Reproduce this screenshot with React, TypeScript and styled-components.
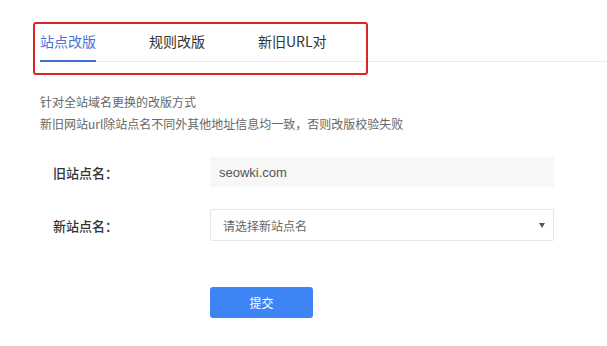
import React from 'react';
import styled, { createGlobalStyle } from 'styled-components';

const GlobalStyle = createGlobalStyle`
  html, body {
    margin: 0;
    padding: 0;
    background: #fff;
  }
  body {
    font-family: 'Noto Sans CJK SC', 'Noto Sans', 'Liberation Sans', sans-serif;
    color: #333;
  }
`;

export const Page = styled.div`
  position: relative;
  width: 607px;
  height: 346px;
  overflow: hidden;
  background: #fff;
`;

export const TabBar = styled.div`
  display: flex;
  align-items: flex-end;
  margin-left: 40px;
  padding-top: 31px;
  border-bottom: 1px solid #ececec;
`;

export const Tab = styled.div<{ active?: boolean }>`
  font-size: 14px;
  line-height: 20px;
  padding-bottom: 9px;
  margin-right: 53px;
  color: ${(p) => (p.active ? '#4873d4' : '#333')};
  border-bottom: 2px solid ${(p) => (p.active ? '#3d6fd8' : 'transparent')};
  margin-bottom: -1px;
  white-space: nowrap;
`;

export const Highlight = styled.div`
  position: absolute;
  left: 33px;
  top: 22px;
  width: 331px;
  height: 49px;
  border: 2px solid #dd2526;
  border-radius: 3px;
  pointer-events: none;
`;

export const Description = styled.div`
  margin: 29px 0 0 40px;
  font-size: 12px;
  line-height: 22px;
  color: #666;
`;

export const Form = styled.div`
  display: flex;
  flex-direction: column;
  padding-left: 53px;
  margin-top: 22px;
`;

export const Row = styled.div<{ gap?: number }>`
  display: flex;
  align-items: center;
  margin-bottom: ${(p) => p.gap ?? 22}px;
`;

export const Label = styled.div`
  width: 157px;
  font-size: 13px;
  font-weight: 500;
  color: #333;
`;

export const ReadonlyInput = styled.div`
  box-sizing: border-box;
  width: 344px;
  height: 30px;
  padding-left: 9px;
  display: flex;
  align-items: center;
  background: #f7f7f7;
  font-size: 13px;
  color: #555;
  font-family: 'Liberation Sans', 'Noto Sans CJK SC', sans-serif;
`;

export const Select = styled.div`
  box-sizing: border-box;
  width: 344px;
  height: 32px;
  padding: 0 8px 0 12px;
  display: flex;
  align-items: center;
  justify-content: space-between;
  border: 1px solid #e6e6e6;
  border-radius: 2px;
  font-size: 12px;
  color: #666;
`;

export const Caret = styled.span`
  width: 0;
  height: 0;
  border-left: 3px solid transparent;
  border-right: 3px solid transparent;
  border-top: 5px solid #555;
`;

export const SubmitButton = styled.button`
  width: 103px;
  height: 31px;
  margin-left: 157px;
  border: none;
  border-radius: 3px;
  background: #3d84f4;
  color: #fff;
  font-size: 12px;
  font-family: inherit;
  cursor: pointer;
`;

export default function App() {
  return (
    <Page>
      <GlobalStyle />
      <TabBar>
        <Tab active>站点改版</Tab>
        <Tab>规则改版</Tab>
        <Tab>新旧URL对</Tab>
      </TabBar>
      <Highlight />
      <Description>
        针对全站域名更换的改版方式
        <br />
        新旧网站url除站点名不同外其他地址信息均一致，否则改版校验失败
      </Description>
      <Form>
        <Row>
          <Label>旧站点名：</Label>
          <ReadonlyInput>seowki.com</ReadonlyInput>
        </Row>
        <Row gap={46}>
          <Label>新站点名：</Label>
          <Select>
            <span>请选择新站点名</span>
            <Caret />
          </Select>
        </Row>
        <SubmitButton>提交</SubmitButton>
      </Form>
    </Page>
  );
}
